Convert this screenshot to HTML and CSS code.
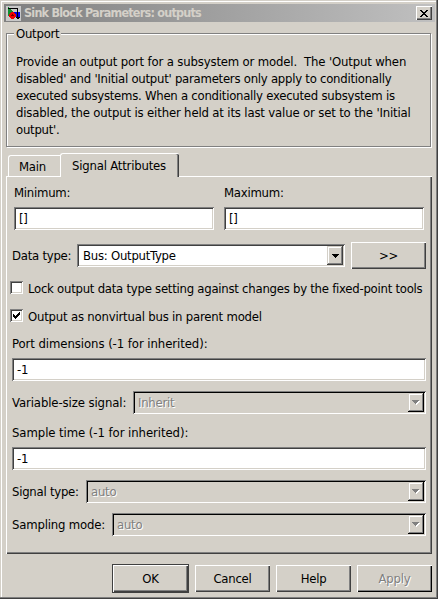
FILE: index.html
```html
<!DOCTYPE html>
<html lang="en">
<head>
<meta charset="utf-8">
<title>Sink Block Parameters: outputs</title>
<link rel="stylesheet" href="styles.css">
</head>
<body>
<main class="window">
  <header class="titlebar">
    <svg class="app-icon" width="15" height="15" viewBox="0 0 15 15" shape-rendering="crispEdges">
      <rect width="15" height="15" fill="#c8c8c8"/>
      <path d="M2 1v9h8V8H9V7H8V6H7V5H6V4H5V3H4V2H3V1z" fill="#109030"/>
      <rect x="7" y="6" width="7" height="5" fill="#0000e8"/>
      <path d="M2 2h10v10h-1V3H2zM10 11h4v1h-4zM11 12h2v1h-2z"/>
      <path d="M5 6h3v1h1v1h1v3H9v1H8v1H5v-1H4v-1H3V8h1V7h1z" fill="#f00000"/>
      <path d="M6 8h1v1h1v1H5V9h1z" fill="#700000"/>
    </svg>
    <h1>Sink Block Parameters: outputs</h1>
    <button class="close" aria-label="Close"><svg width="8" height="7" viewBox="0 0 8 7" shape-rendering="crispEdges"><path d="M0 0h2v1h1v1h2V1h1V0h2v1H7v1H6v1H5v1h1v1h1v1h1v1H6V6H5V5H3v1H2v1H0V6h1V5h1V4h1V3H2V2H1V1H0z"/></svg></button>
  </header>

  <section class="group">
    <h2><span>Outport</span></h2>
    <p><span class="loose">Provide an output port for a subsystem or model.&nbsp; The 'Output when</span><br>disabled' and 'Initial output' parameters only apply to conditionally<br>executed subsystems. When a conditionally executed subsystem is<br><span class="loose">disabled, the output is either held at its last value or set to the 'Initial</span><br>output'.</p>
  </section>

  <nav class="tabs">
    <span class="tab">Main</span>
    <span class="tab active">Signal Attributes</span>
  </nav>

  <section class="pane">
    <div class="range">
      <label>Minimum:<span class="field">[]</span></label>
      <label>Maximum:<span class="field">[]</span></label>
    </div>
    <div class="row type-row">
      <span class="label">Data type:</span>
      <div class="field combo"><span>Bus: OutputType</span><i class="drop"><svg width="7" height="4" shape-rendering="crispEdges"><path d="M0 0h7v1H6v1H5v1H4v1H3V3H2V2H1V1H0z"/></svg></i></div>
      <button class="button">&gt;&gt;</button>
    </div>
    <div class="check"><i class="box"></i><span>Lock output data type setting against changes by the fixed-point tools</span></div>
    <div class="check nonvirtual"><i class="box"><svg width="7" height="7" viewBox="0 0 7 7" shape-rendering="crispEdges"><path d="M0 2h1v1h1v1h1V3h1V2h1V1h1V0h1v3H6v1H5v1H4v1H3v1H2V6H1V5H0z"/></svg></i><span>Output as nonvirtual bus in parent model</span></div>
    <div class="caption">Port dimensions (-1 for inherited):</div>
    <div class="field wide">-1</div>
    <div class="row variable">
      <span class="label">Variable-size signal:</span>
      <div class="field combo disabled"><span>Inherit</span><i class="drop"><svg width="8" height="5" shape-rendering="crispEdges"><path d="M1 1h7v1H7v1H6v1H5v1H4V4H3V3H2V2H1z" fill="#fff"/><path d="M0 0h7v1H6v1H5v1H4v1H3V3H2V2H1V1H0z" fill="#808080"/></svg></i></div>
    </div>
    <div class="caption">Sample time (-1 for inherited):</div>
    <div class="field wide">-1</div>
    <div class="row signal">
      <span class="label">Signal type:</span>
      <div class="field combo disabled"><span>auto</span><i class="drop"><svg width="8" height="5" shape-rendering="crispEdges"><path d="M1 1h7v1H7v1H6v1H5v1H4V4H3V3H2V2H1z" fill="#fff"/><path d="M0 0h7v1H6v1H5v1H4v1H3V3H2V2H1V1H0z" fill="#808080"/></svg></i></div>
    </div>
    <div class="row sampling">
      <span class="label">Sampling mode:</span>
      <div class="field combo disabled"><span>auto</span><i class="drop"><svg width="8" height="5" shape-rendering="crispEdges"><path d="M1 1h7v1H7v1H6v1H5v1H4V4H3V3H2V2H1z" fill="#fff"/><path d="M0 0h7v1H6v1H5v1H4v1H3V3H2V2H1V1H0z" fill="#808080"/></svg></i></div>
    </div>
  </section>

  <footer class="actions">
    <button class="button default">OK</button>
    <button class="button">Cancel</button>
    <button class="button">Help</button>
    <button class="button" disabled>Apply</button>
  </footer>
</main>
</body>
</html>
```
FILE: styles.css
```css
* { box-sizing: border-box; }
body {
  margin: 0;
  font: 13px/17px "DejaVu Sans Condensed", "DejaVu Sans", sans-serif;
  font-stretch: condensed;
  letter-spacing: -0.25px;
  color: #000;
  white-space: nowrap;
}
i, h1, h2, p { margin: 0; font-style: normal; }
svg { display: block; }
.window {
  display: flex;
  flex-direction: column;
  width: 438px;
  height: 599px;
  padding: 3px 3px 0 4px;
  background: #d4d0c8;
  box-shadow: inset -1px -1px #404040, inset -2px -2px #808080, inset 1px 1px #d4d0c8, inset 2px 2px #fff;
}
.titlebar {
  display: flex;
  align-items: center;
  height: 18px;
  margin: 1px 0 0;
  padding: 0 3px 0 2px;
  background: linear-gradient(90deg, #808080, #c0c0c0);
}
.app-icon { flex: none; }
.titlebar h1 {
  flex: 1;
  margin-left: 3px;
  font-size: 12.5px;
  line-height: 18px;
  letter-spacing: -0.78px;
  color: #d4d0c8;
}
button { font: inherit; letter-spacing: inherit; color: #000; }
.close, .button {
  display: flex;
  align-items: center;
  justify-content: center;
  padding: 0;
  border: 0;
  background: #d4d0c8;
  box-shadow: inset 1px 1px #fff, inset -1px -1px #404040, inset -2px -2px #808080;
}
.close { width: 16px; height: 14px; }
.group {
  width: 425px;
  height: 114px;
  margin: 11px 0 0 2px;
  border: 1px solid #808080;
  box-shadow: inset 1px 1px #fff, 1px 1px #fff;
}
.group h2 { height: 17px; margin: -9px 0 0 7px; font-size: 13px; font-weight: normal; }
.group h2 span { display: inline-block; padding: 0 2px; background: #d4d0c8; }
.group p { margin: 11px 0 0 9px; }
.loose { letter-spacing: -0.16px; }
.tabs {
  display: flex;
  align-items: flex-end;
  height: 24px;
  margin: 6px 0 -1px 4px;
}
.tab {
  width: 52px;
  height: 21px;
  margin-bottom: 1px;
  padding: 2px 0 0 10px;
  border: solid #fff;
  border-width: 1px 0 0 1px;
  border-radius: 3px 0 0 0;
}
.tab.active {
  width: 119px;
  height: 24px;
  margin-bottom: 0;
  padding: 3px 0 0 11px;
  background: #d4d0c8;
  border-top-right-radius: 2px;
  box-shadow: inset -1px 0 #404040, inset -2px 0 #808080;
  letter-spacing: -0.2px;
  z-index: 1;
}
.pane {
  width: 426px;
  height: 378px;
  margin-left: 2px;
  padding: 8px 6px 0;
  box-shadow: inset 1px 1px #fff, inset -1px -1px #404040, inset -2px -2px #808080;
}
.range { display: flex; gap: 10px; margin-left: 2px; }
.range .field { margin-top: 6px; width: 200px; }
.field {
  display: block;
  height: 23px;
  padding: 3px 5px 0;
  background: #fff;
  box-shadow: inset 1px 1px #808080, inset -1px -1px #fff, inset 2px 2px #404040, inset -2px -2px #d4d0c8;
}
.row { display: flex; align-items: center; }
.label { flex: none; }
.type-row { height: 27px; margin-top: 12px; }
.type-row .label { width: 65px; }
.type-row .combo { flex: none; width: 268px; margin-right: 6px; padding-left: 6px; }
.combo { display: flex; flex: 1; justify-content: space-between; padding: 2px 2px 2px 5px; }
.combo > span { line-height: 20px; }
.drop {
  display: flex;
  align-items: center;
  justify-content: center;
  width: 16px;
  height: 19px;
  background: #d4d0c8;
  box-shadow: inset -1px -1px #404040, inset 1px 1px #d4d0c8, inset -2px -2px #808080, inset 2px 2px #fff;
}
.disabled, .button:disabled { color: #808080; text-shadow: 1px 1px #fff; }
.disabled {
  background: #d4d0c8;
  box-shadow: inset 1px 1px #808080, inset -1px -1px #fff, inset 2px 2px #000;
}
.disabled .drop { box-shadow: inset -1px -1px #000, inset 1px 1px #d4d0c8, inset -2px -2px #808080, inset 2px 2px #fff; }
.button { width: 75px; height: 27px; }
.check { display: flex; align-items: center; height: 17px; margin: 11px 0 0 -2px; }
.nonvirtual { letter-spacing: -0.2px; }
.box {
  flex: none;
  width: 13px;
  height: 13px;
  margin-right: 5px;
  margin-top: -3px;
  padding: 3px;
  background: #fff;
  box-shadow: inset 1px 1px #808080, inset -1px -1px #fff, inset 2px 2px #404040, inset -2px -2px #d4d0c8;
}
.caption { margin-top: 10px; letter-spacing: -0.07px; }
.wide { width: 414px; margin-top: 6px; }
.variable { margin-top: 10px; }
.variable .label { width: 121px; letter-spacing: -0.1px; }
.signal { margin-top: 10px; }
.signal .label { width: 74px; }
.sampling { margin-top: 10px; }
.sampling .label { width: 100px; letter-spacing: -0.18px; }
.actions { display: flex; gap: 6px; margin: 11px 0 0 109px; }
.default { margin-right: 1px; outline: 1px solid #404040; }
.button:disabled { box-shadow: inset 1px 1px #fff, inset -1px -1px #000, inset -2px -2px #808080; }
```
